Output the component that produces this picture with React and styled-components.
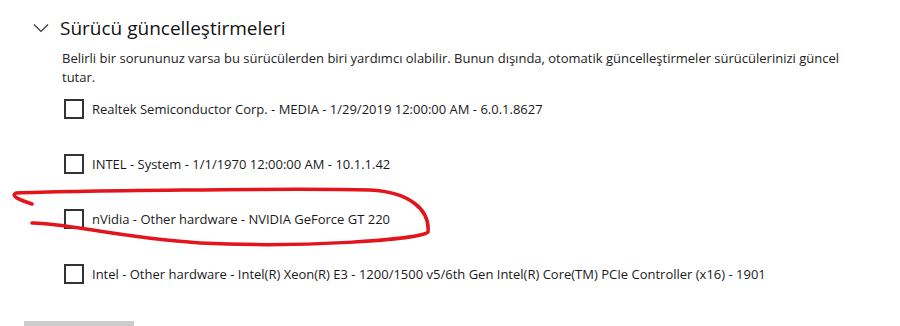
import React from 'react';
import styled, { createGlobalStyle } from 'styled-components';

const Global = createGlobalStyle`
  body {
    margin: 0;
    background: #fff;
    font-family: 'Open Sans', 'Noto Sans', sans-serif;
    color: #000;
  }
`;

const Page = styled.div`
  position: relative;
  width: 900px;
  height: 326px;
  overflow: hidden;
  padding-left: 24px;
  box-sizing: border-box;
`;

const Header = styled.div`
  display: flex;
  align-items: center;
  gap: 11px;
  height: 28px;
  padding-top: 14px;
  padding-left: 9px;
`;

const Title = styled.h2`
  margin: 0;
  font-size: 19px;
  font-weight: 400;
  line-height: 28px;
  color: #111;
`;

const Body = styled.div`
  padding-left: 38px;
`;

const Description = styled.p`
  margin: 7px 0 0;
  width: 790px;
  font-size: 13px;
  line-height: 19px;
  color: #222;
`;

const List = styled.div`
  display: flex;
  flex-direction: column;
  gap: 11px;
`;

const Row = styled.label`
  display: flex;
  align-items: center;
  gap: 8px;
  height: 44px;
  padding-left: 2px;
  font-size: 13px;
  color: #1a1a1a;
`;

const Box = styled.span`
  width: 20px;
  height: 20px;
  box-sizing: border-box;
  border: 2px solid #333;
  background: #fff;
  flex-shrink: 0;
`;

const Button = styled.div`
  margin-top: 25px;
  width: 110px;
  height: 32px;
  background: #cccccc;
`;

const Scribble = styled.svg`
  position: absolute;
  left: 0;
  top: 0;
  pointer-events: none;
`;

const Chevron = () => (
  <svg width="16" height="10" viewBox="0 0 16 10">
    <path d="M1 1.5 L8 8.5 L15 1.5" fill="none" stroke="#333" strokeWidth="1.2" />
  </svg>
);

const drivers = [
  'Realtek Semiconductor Corp. - MEDIA - 1/29/2019 12:00:00 AM - 6.0.1.8627',
  'INTEL - System - 1/1/1970 12:00:00 AM - 10.1.1.42',
  'nVidia - Other hardware - NVIDIA GeForce GT 220',
  'Intel - Other hardware - Intel(R) Xeon(R) E3 - 1200/1500 v5/6th Gen Intel(R) Core(TM) PCIe Controller (x16) - 1901',
];

export default function App() {
  return (
    <>
      <Global />
      <Page>
        <Header>
          <Chevron />
          <Title>Sürücü güncelleştirmeleri</Title>
        </Header>
        <Body>
          <Description>
            Belirli bir sorununuz varsa bu sürücülerden biri yardımcı olabilir. Bunun dışında, otomatik güncelleştirmeler sürücülerinizi güncel tutar.
          </Description>
          <List>
            {drivers.map((d) => (
              <Row key={d}>
                <Box />
                <span>{d}</span>
              </Row>
            ))}
          </List>
        </Body>
        <Button />
        <Scribble width="900" height="326" viewBox="0 0 900 326">
          <path
            d="M32 204 C20 200 10 196 16 193 C60 191 300 188 370 190 C410 192 430 210 428 232 C420 240 300 248 200 243 C120 238 60 222 32 223"
            fill="none"
            stroke="#e3141b"
            strokeWidth="3.5"
            strokeLinecap="round"
          />
        </Scribble>
      </Page>
    </>
  );
}
